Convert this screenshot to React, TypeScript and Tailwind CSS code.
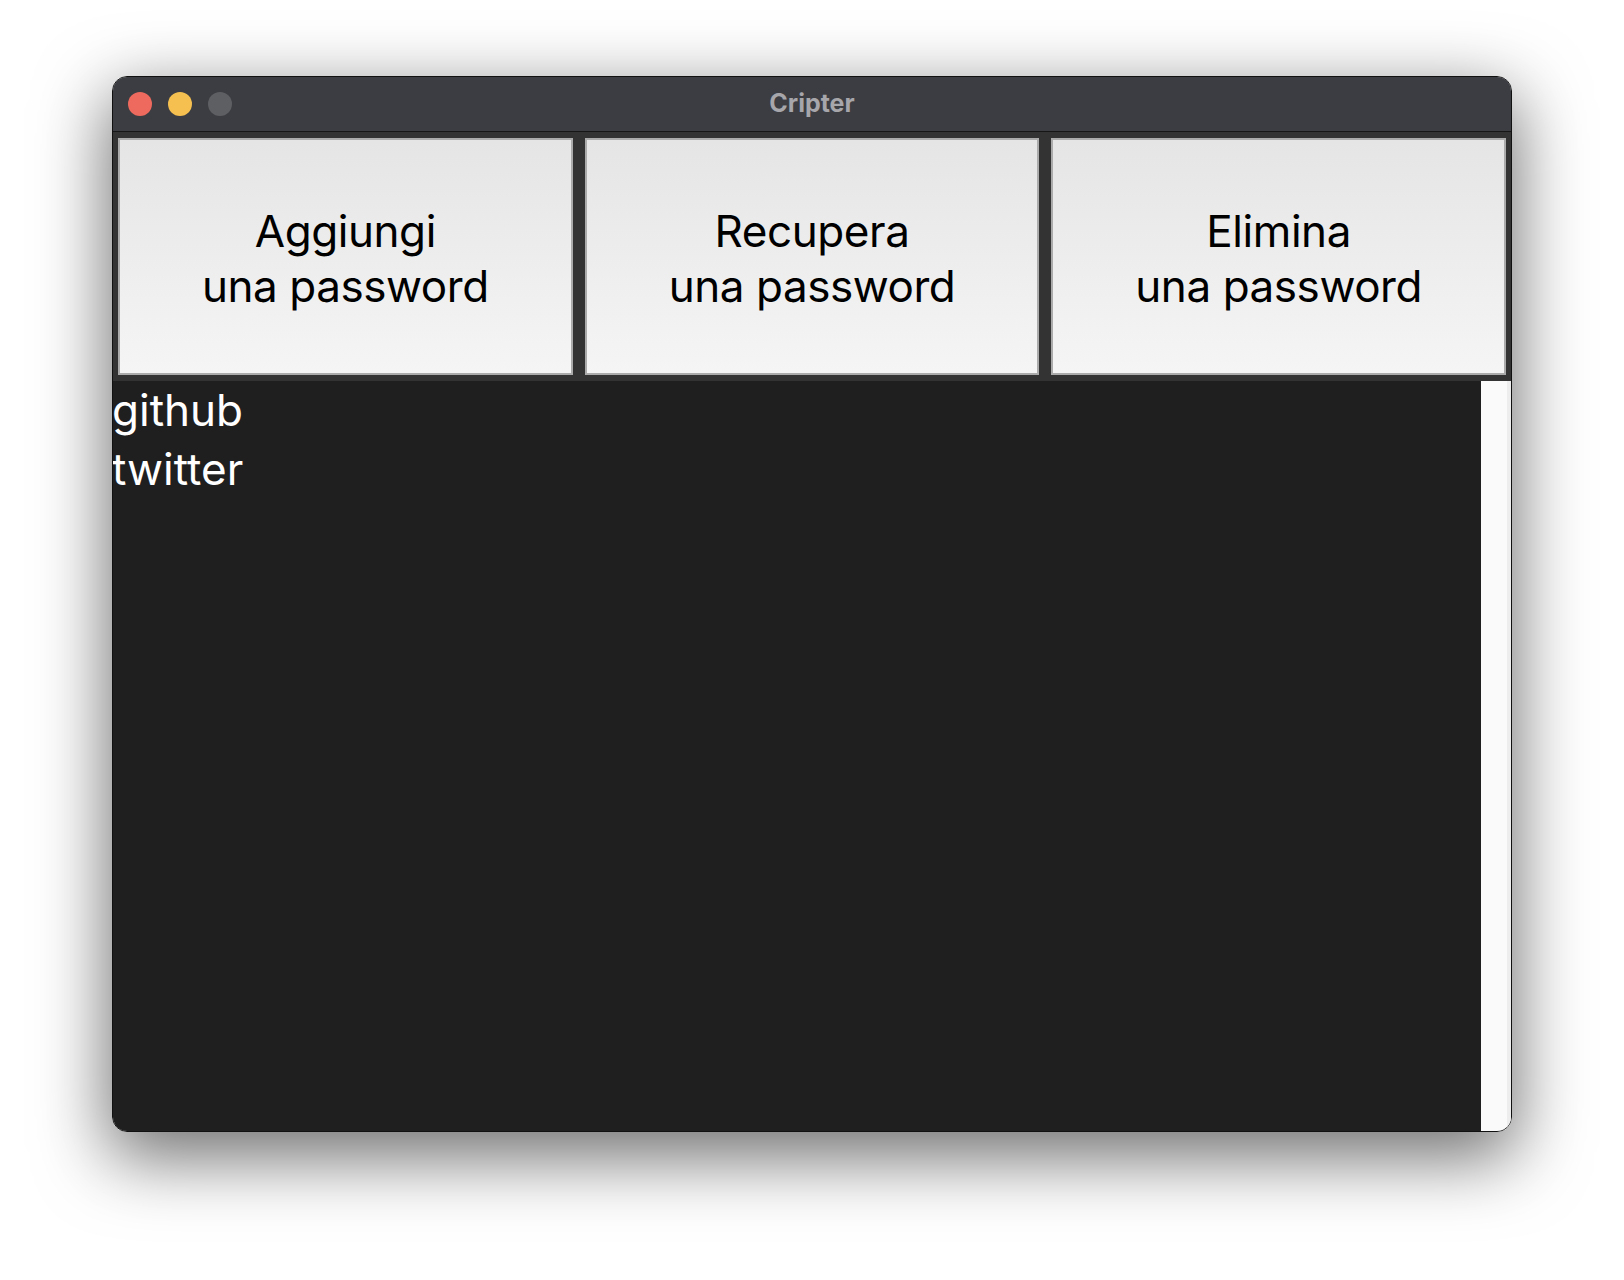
import React from 'react';

const actions = [
  { title: 'Aggiungi', sub: 'una password' },
  { title: 'Recupera', sub: 'una password' },
  { title: 'Elimina', sub: 'una password' },
];

const entries = ['github', 'twitter'];

export default function App() {
  return (
    <div className="w-[1624px] h-[1280px] bg-white pl-[112px] pt-[76px] font-['Inter','Noto_Sans',sans-serif]">
      {/* Window */}
      <div className="w-[1400px] h-[1056px] flex flex-col rounded-[15px] overflow-hidden border border-[#111] shadow-[0_22px_70px_4px_rgba(0,0,0,0.56)]">
        {/* Title bar */}
        <div className="relative h-[55px] shrink-0 bg-[#3c3d42] border-b border-[#161616] flex items-center">
          <div className="flex items-center gap-[16px] pl-[15px]">
            <span className="w-[24px] h-[24px] rounded-full bg-[#ee6a5e]" />
            <span className="w-[24px] h-[24px] rounded-full bg-[#f5c04f]" />
            <span className="w-[24px] h-[24px] rounded-full bg-[#5e5f63]" />
          </div>
          <div className="absolute inset-0 flex items-center justify-center text-[25px] font-bold text-[#a6a6ab]">
            Cripter
          </div>
        </div>

        {/* Actions */}
        <div className="shrink-0 bg-[#333333] px-[5px] py-[6px] grid grid-cols-3 gap-[12px]">
          {actions.map((a) => (
            <button
              key={a.title}
              className="h-[237px] border-2 border-[#ababab] bg-gradient-to-b from-[#e5e5e5] to-[#f5f5f5] flex flex-col items-center justify-center text-[44px] leading-[55px] tracking-[-0.01em] text-black pt-[5px]"
            >
              <span>{a.title}</span>
              <span>{a.sub}</span>
            </button>
          ))}
        </div>

        {/* List */}
        <div className="flex-1 flex bg-[#1f1f1f]">
          <div className="flex-1 text-white text-[44px] leading-[59px] -ml-[1px]">
            {entries.map((e) => (
              <div key={e}>{e}</div>
            ))}
          </div>
          <div className="w-[30px] bg-[#fafafa] border-r-[4px] border-[#ededed]" />
        </div>
      </div>
    </div>
  );
}
